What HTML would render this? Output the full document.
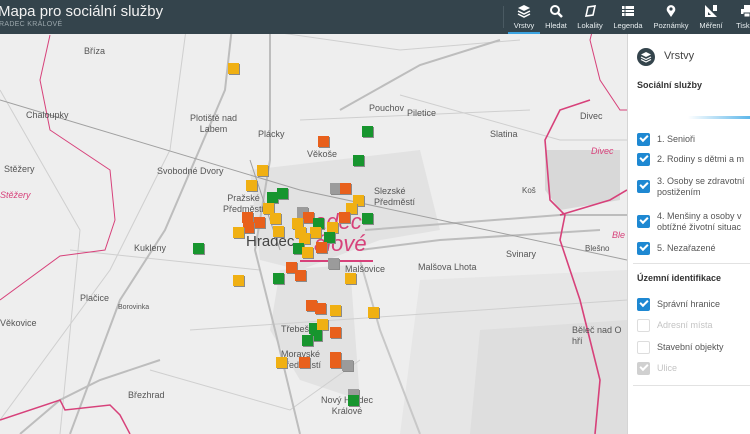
<!DOCTYPE html>
<html><head><meta charset="utf-8"><style>
*{margin:0;padding:0;box-sizing:border-box}
body{width:750px;height:434px;overflow:hidden;font-family:"Liberation Sans",sans-serif;background:#ececec;position:relative}
#hdr{position:absolute;left:0;top:0;width:750px;height:34px;background:#34444c;color:#fff}
#hdr .t{position:absolute;left:-2px;top:3px;font-size:15px;color:#f2f2f2}
#hdr .s{position:absolute;left:-1px;top:21px;font-size:7px;color:#9aa6ab;letter-spacing:.3px}
.nav{position:absolute;top:0;height:34px;text-align:center;font-size:7.5px;color:#e8eef0}
.nav span{position:absolute;left:0;right:0;top:21px}
.nav svg{position:absolute;left:50%;top:4px;transform:translateX(-50%)}
#side{position:absolute;left:627px;top:34px;width:123px;height:400px;background:#fff;border-left:1px solid #d5d5d5}
.cb{position:absolute;left:9px;width:13px;height:13px;border-radius:2px;background:#1e88d2}
.cb:after{content:"";position:absolute;left:3px;top:2px;width:6px;height:3px;border-left:2px solid #fff;border-bottom:2px solid #fff;transform:rotate(-45deg)}
.cb.e{background:#fff;border:1px solid #ddd}.cb.e:after{display:none}
.cb.g{background:#d0d0d0}
.lb{position:absolute;left:29px;font-size:9px;color:#555;line-height:11px;white-space:nowrap}
.m{position:absolute;width:11px;height:11px;box-shadow:1px 1px 0 #8a8a8a}
.o{background:#e8601c}.y{background:#f0b013}.g{background:#17952e}.x{background:#9b9b9b}
.ml{position:absolute;font-size:9px;color:#555;white-space:nowrap}
</style></head><body>
<svg width="627" height="434" style="position:absolute;left:0;top:0">
<rect width="627" height="434" fill="#eeeeee"/>
<g fill="#e2e2e2">
<path d="M250 170 L420 150 L440 230 L380 240 L300 270 L260 260Z"/>
<path d="M280 270 L350 265 L360 400 L300 380 L270 330Z"/>
<path d="M545 150 L620 150 L620 200 L560 210 L545 190Z" fill="#d8d8d8"/>
<path d="M420 280 L627 270 L627 434 L400 434 Z" fill="#e6e6e6"/>
<path d="M480 330 L627 320 L627 434 L470 434Z" fill="#dedede"/>
</g>
<g fill="none" stroke="#cfcfcf" stroke-width="1">
<path d="M0 90 L80 230 L60 434"/><path d="M190 0 L170 150 L110 270 L0 420"/>
<path d="M70 250 L260 270"/><path d="M120 10 L400 50 L520 40"/>
<path d="M400 95 L560 140 L627 140"/><path d="M300 120 L530 110"/>
<path d="M190 330 L627 300"/><path d="M150 370 L290 410 L360 360"/>
</g>
<g fill="none" stroke="#bdbdbd" stroke-width="2">
<path d="M235 0 L225 90 L165 230 L120 300 L70 434"/>
<path d="M270 0 L270 160 L255 250 L275 330 L300 434"/>
<path d="M340 110 L420 65 L500 40"/>
<path d="M365 230 L560 215 L627 215"/>
<path d="M360 250 L440 240 L600 230"/>
<path d="M20 434 L60 400 L100 380 L160 360"/>
<path d="M360 260 L380 330 L420 434" stroke="#c8c8c8"/>
</g>
<path d="M0 100 L300 190 L627 260" stroke="#a0a0a0" stroke-width="1" fill="none"/>
<path d="M250 160 L280 250" stroke="#a0a0a0" stroke-width="1" fill="none"/>
<g fill="none" stroke="#d7417a" stroke-width="1">
<path d="M50 35 L40 80 L50 130 L110 170 L115 220 L105 250 L60 256 L0 300"/>
<path d="M0 420 L60 400 L65 410 L110 405 L120 415 L130 434" stroke-width="1.5"/>
<path d="M200 0 L180 20"/><path d="M430 0 L470 25 L520 15 L560 0"/>
<path d="M600 0 L590 40 L600 80 L620 110 L627 110"/>
<path d="M590 100 L560 110 L545 140 L550 200 L565 215 L560 240 L570 270 L580 300 L590 340 L600 380 L595 434" stroke-width="1.6"/>
<path d="M560 215 L610 200 L627 190" stroke-width="1.6"/>
</g>
<line x1="300" y1="261" x2="373" y2="261" stroke="#d7417a" stroke-width="2"/>
</svg>
<div class="ml" style="left:84px;top:46px">Bříza</div>
<div class="ml" style="left:26px;top:110px">Chaloupky</div>
<div class="ml" style="left:190px;top:113px;text-align:center;line-height:11px">Plotiště nad<br>Labem</div>
<div class="ml" style="left:258px;top:129px">Plácky</div>
<div class="ml" style="left:369px;top:103px">Pouchov</div>
<div class="ml" style="left:407px;top:108px">Piletice</div>
<div class="ml" style="left:490px;top:129px">Slatina</div>
<div class="ml" style="left:580px;top:111px">Divec</div>
<div class="ml" style="left:591px;top:146px;color:#d7417a;font-style:italic">Divec</div>
<div class="ml" style="left:4px;top:164px">Stěžery</div>
<div class="ml" style="left:0px;top:190px;color:#d7417a;font-style:italic">Stěžery</div>
<div class="ml" style="left:157px;top:166px">Svobodné Dvory</div>
<div class="ml" style="left:307px;top:149px">Věkoše</div>
<div class="ml" style="left:374px;top:186px;line-height:11px">Slezské<br>Předměstí</div>
<div class="ml" style="left:223px;top:193px;line-height:11px;text-align:center">Pražské<br>Předměstí</div>
<div class="ml" style="left:522px;top:186px;font-size:8px">Koš</div>
<div class="ml" style="left:134px;top:243px">Kukleny</div>
<div class="ml" style="left:246px;top:233px;font-size:15px;color:#444">Hradec</div>
<div class="ml" style="left:314px;top:211px;font-size:22px;color:#d7417a;font-style:italic;line-height:22px">adec<br>álové</div>
<div class="ml" style="left:345px;top:264px">Malšovice</div>
<div class="ml" style="left:418px;top:262px">Malšova Lhota</div>
<div class="ml" style="left:506px;top:249px">Svinary</div>
<div class="ml" style="left:612px;top:230px;color:#d7417a;font-style:italic">Ble</div>
<div class="ml" style="left:585px;top:244px;font-size:8px">Blešno</div>
<div class="ml" style="left:80px;top:293px">Plačice</div>
<div class="ml" style="left:0px;top:318px">Věkovice</div>
<div class="ml" style="left:118px;top:304px;font-size:7px">Borovinka</div>
<div class="ml" style="left:281px;top:324px">Třebeš</div>
<div class="ml" style="left:280px;top:349px;line-height:11px;text-align:center">Moravské<br>Předměstí</div>
<div class="ml" style="left:321px;top:395px;line-height:11px;text-align:center">Nový Hradec<br>Králové</div>
<div class="ml" style="left:128px;top:390px">Březhrad</div>
<div class="ml" style="left:572px;top:325px;line-height:11px">Běleč nad O<br>hří</div>

<div class="m y" style="left:228px;top:63px"></div>
<div class="m o" style="left:318px;top:136px"></div>
<div class="m g" style="left:362px;top:126px"></div>
<div class="m g" style="left:353px;top:155px"></div>
<div class="m y" style="left:257px;top:165px"></div>
<div class="m y" style="left:246px;top:180px"></div>
<div class="m g" style="left:267px;top:192px"></div>
<div class="m g" style="left:277px;top:188px"></div>
<div class="m y" style="left:263px;top:203px"></div>
<div class="m o" style="left:242px;top:212px"></div>
<div class="m o" style="left:254px;top:217px"></div>
<div class="m o" style="left:243px;top:222px"></div>
<div class="m y" style="left:233px;top:227px"></div>
<div class="m y" style="left:270px;top:213px"></div>
<div class="m y" style="left:273px;top:226px"></div>
<div class="m x" style="left:297px;top:207px"></div>
<div class="m o" style="left:303px;top:212px"></div>
<div class="m y" style="left:292px;top:218px"></div>
<div class="m g" style="left:313px;top:218px"></div>
<div class="m y" style="left:295px;top:227px"></div>
<div class="m y" style="left:310px;top:227px"></div>
<div class="m y" style="left:327px;top:222px"></div>
<div class="m g" style="left:324px;top:232px"></div>
<div class="m y" style="left:299px;top:233px"></div>
<div class="m g" style="left:293px;top:243px"></div>
<div class="m o" style="left:316px;top:242px"></div>
<div class="m y" style="left:302px;top:247px"></div>
<div class="m x" style="left:330px;top:183px"></div>
<div class="m o" style="left:340px;top:183px"></div>
<div class="m y" style="left:353px;top:195px"></div>
<div class="m y" style="left:346px;top:203px"></div>
<div class="m o" style="left:339px;top:212px"></div>
<div class="m g" style="left:362px;top:213px"></div>
<div class="m g" style="left:193px;top:243px"></div>
<div class="m o" style="left:286px;top:262px"></div>
<div class="m o" style="left:295px;top:270px"></div>
<div class="m x" style="left:328px;top:258px"></div>
<div class="m y" style="left:233px;top:275px"></div>
<div class="m g" style="left:273px;top:273px"></div>
<div class="m y" style="left:345px;top:273px"></div>
<div class="m o" style="left:306px;top:300px"></div>
<div class="m o" style="left:315px;top:303px"></div>
<div class="m y" style="left:330px;top:305px"></div>
<div class="m y" style="left:368px;top:307px"></div>
<div class="m g" style="left:309px;top:323px"></div>
<div class="m y" style="left:317px;top:319px"></div>
<div class="m g" style="left:311px;top:330px"></div>
<div class="m o" style="left:330px;top:327px"></div>
<div class="m g" style="left:302px;top:335px"></div>
<div class="m y" style="left:276px;top:357px"></div>
<div class="m o" style="left:299px;top:357px"></div>
<div class="m o" style="left:330px;top:352px"></div>
<div class="m o" style="left:330px;top:357px"></div>
<div class="m x" style="left:342px;top:360px"></div>
<div class="m x" style="left:348px;top:389px"></div>
<div class="m g" style="left:348px;top:395px"></div>

<div id="hdr">
<div class="t">Mapa pro sociální služby</div>
<div class="s">RADEC KRÁLOVÉ</div>
<div style="position:absolute;left:503px;top:6px;width:1px;height:22px;background:#4a5a62"></div>
<div class="nav" style="left:508px;width:32px;border-bottom:2px solid #3ba3e0">
<svg width="14" height="14" viewBox="0 0 14 14"><path d="M7 1 L13 4 L7 7 L1 4Z" fill="#fff"/><path d="M1 7 L7 10 L13 7M1 10 L7 13 L13 10" stroke="#fff" stroke-width="1.5" fill="none"/></svg><span>Vrstvy</span></div>
<div class="nav" style="left:542px;width:28px"><svg width="14" height="14"><circle cx="6" cy="6" r="4" stroke="#fff" stroke-width="2" fill="none"/><path d="M9 9 L13 13" stroke="#fff" stroke-width="2.5"/></svg><span>Hledat</span></div>
<div class="nav" style="left:574px;width:32px"><svg width="14" height="14"><path d="M3 12 L5 3 L12 2 L10 11Z" stroke="#fff" stroke-width="1.6" fill="none"/></svg><span>Lokality</span></div>
<div class="nav" style="left:610px;width:36px"><svg width="14" height="14"><rect x="1" y="2" width="12" height="10" fill="#fff"/><path d="M1 5.5H13M1 8.5H13M4 2V12" stroke="#34444c"/></svg><span>Legenda</span></div>
<div class="nav" style="left:651px;width:40px"><svg width="12" height="14"><path d="M6 13 L2 7 A4.3 4.3 0 1 1 10 7Z" fill="#fff"/><circle cx="6" cy="5" r="1.6" fill="#34444c"/></svg><span>Poznámky</span></div>
<div class="nav" style="left:696px;width:30px"><svg width="14" height="14"><path d="M1 1 L13 13 H1Z" fill="#fff"/><path d="M4 8 L7 11 H4Z" fill="#34444c"/><rect x="9" y="1" width="4" height="6" fill="#fff"/></svg><span>Měření</span></div>
<div class="nav" style="left:730px;width:34px"><svg width="14" height="14"><rect x="4" y="1" width="6" height="4" fill="#fff"/><rect x="1" y="5" width="12" height="5" fill="#fff"/><rect x="4" y="9" width="6" height="4" fill="#fff" stroke="#34444c"/></svg><span>Tisk m</span></div>
</div>

<div id="side">
<div style="position:absolute;left:9px;top:14px;width:18px;height:18px;border-radius:50%;background:#34444c"></div>
<svg style="position:absolute;left:12px;top:17px" width="12" height="12"><path d="M6 1 L11 3.5 L6 6 L1 3.5Z" fill="#fff"/><path d="M1 6 L6 8.5 L11 6M1 8.5 L6 11 L11 8.5" stroke="#fff" stroke-width="1.2" fill="none"/></svg>
<div style="position:absolute;left:36px;top:16px;font-size:11px;color:#444">Vrstvy</div>
<div style="position:absolute;left:9px;top:46px;font-size:9px;font-weight:bold;color:#333">Sociální služby</div>
<div style="position:absolute;left:60px;top:82px;width:63px;height:3px;background:linear-gradient(90deg,#fff,#5bb6ea)"></div>
<div class="cb" style="top:99px"></div><div class="lb" style="top:100px">1. Senioři</div>
<div class="cb" style="top:119px"></div><div class="lb" style="top:120px">2. Rodiny s dětmi a m</div>
<div class="cb" style="top:146px"></div><div class="lb" style="top:142px">3. Osoby se zdravotní<br>postižením</div>
<div class="cb" style="top:181px"></div><div class="lb" style="top:177px">4. Menšiny a osoby v<br>obtížné životní situac</div>
<div class="cb" style="top:208px"></div><div class="lb" style="top:209px">5. Nezařazené</div>
<div style="position:absolute;left:5px;top:229px;width:118px;height:1px;background:#e2e2e2"></div>
<div style="position:absolute;left:9px;top:239px;font-size:9px;font-weight:bold;color:#333">Územní identifikace</div>
<div class="cb" style="top:264px"></div><div class="lb" style="top:265px">Správní hranice</div>
<div class="cb e" style="top:285px"></div><div class="lb" style="top:286px;color:#c4c4c4">Adresní místa</div>
<div class="cb e" style="top:307px"></div><div class="lb" style="top:308px">Stavební objekty</div>
<div class="cb g" style="top:328px"></div><div class="lb" style="top:329px;color:#c4c4c4">Ulice</div>
<div style="position:absolute;left:5px;top:351px;width:118px;height:1px;background:#e2e2e2"></div>
</div>
</body></html>
